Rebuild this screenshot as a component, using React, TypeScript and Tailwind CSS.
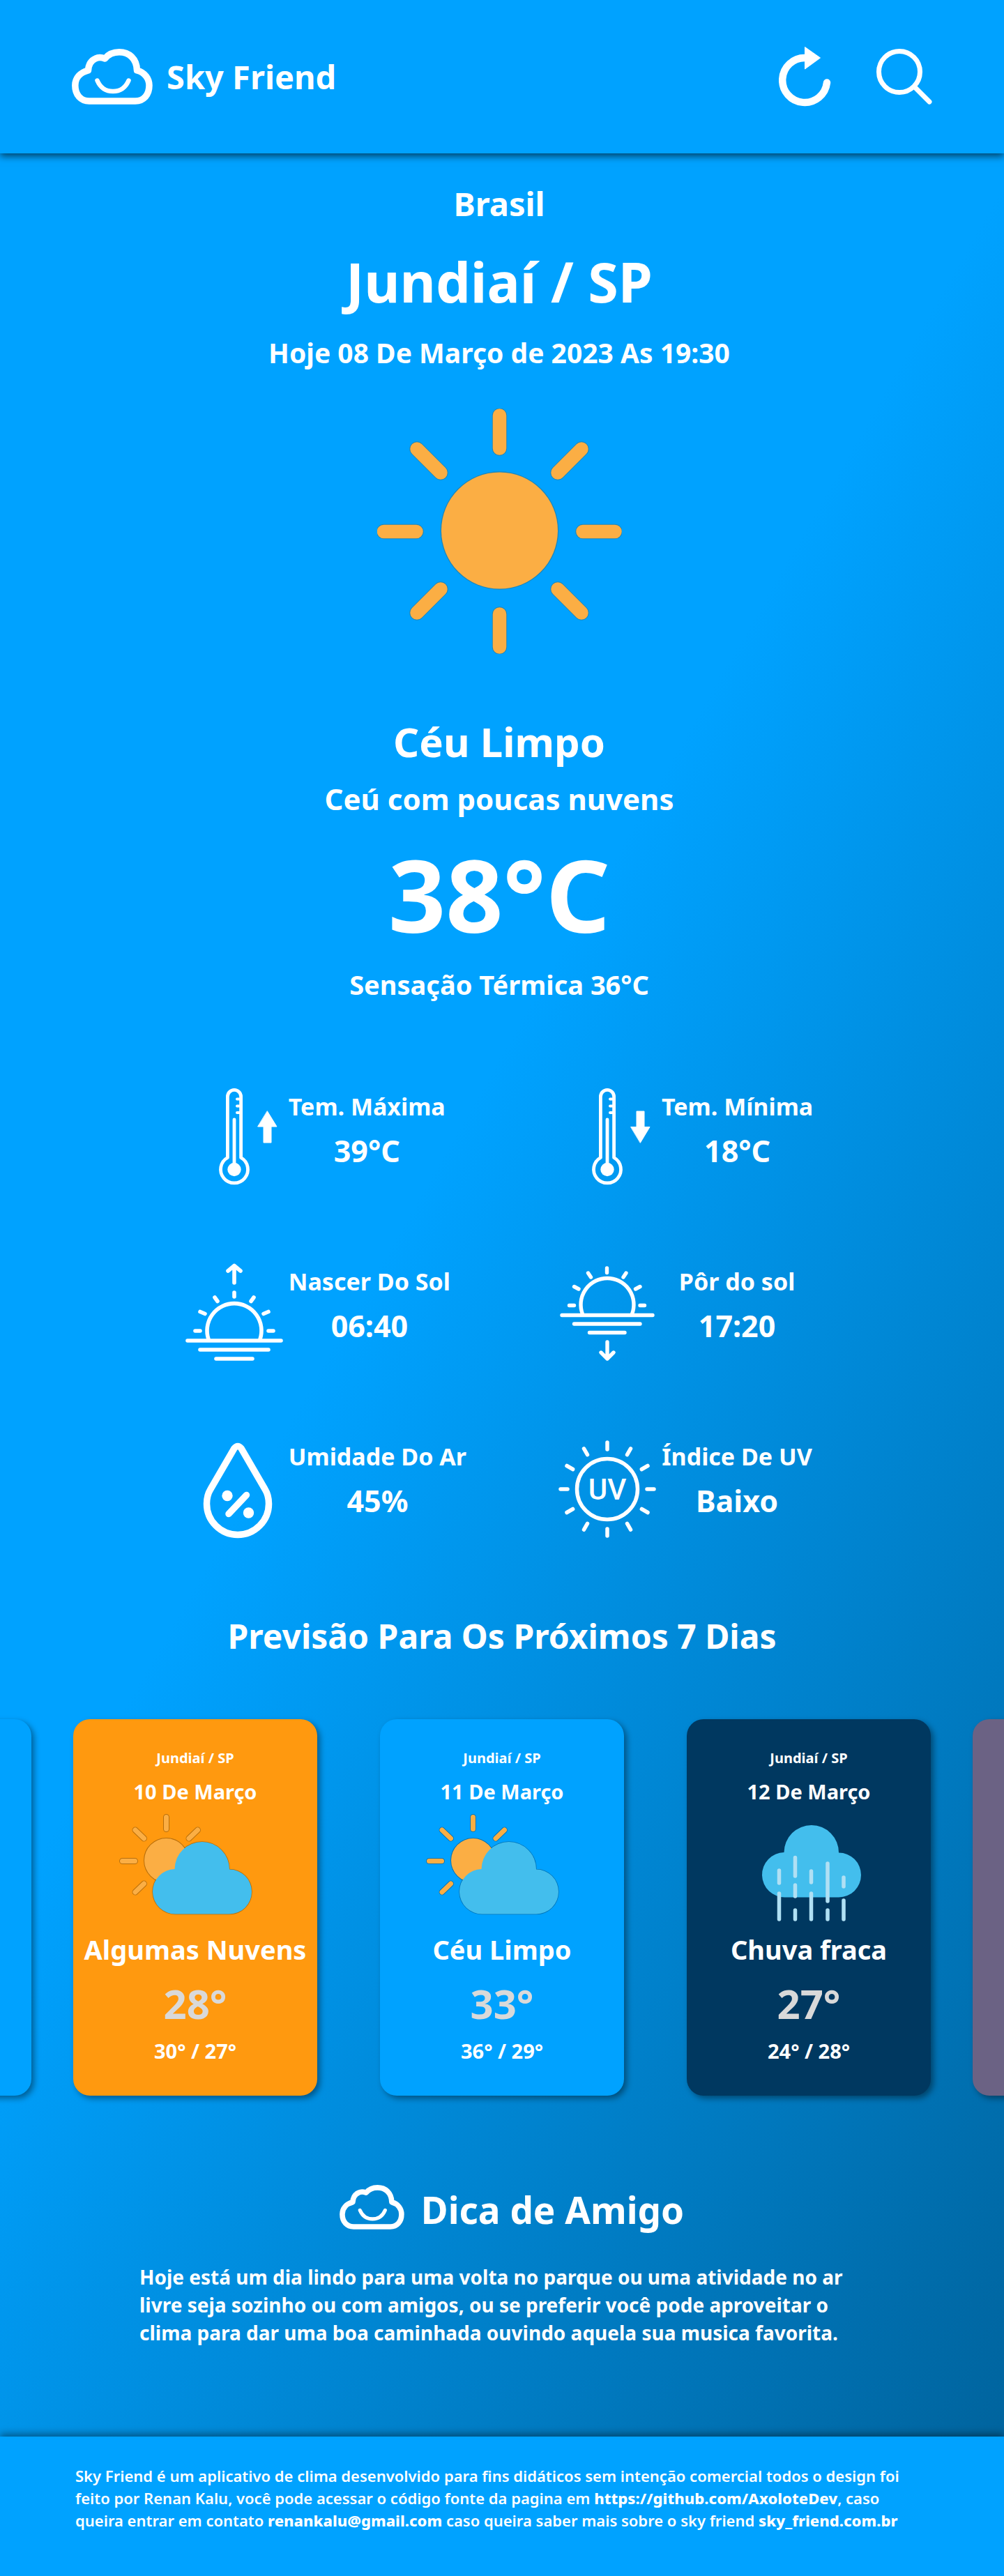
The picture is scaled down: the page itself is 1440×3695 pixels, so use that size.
import type { ReactNode } from "react";

function CloudLogo({ className }: { className: string }) {
  return (
    <svg viewBox="0 0 116 80" className={className} fill="none" stroke="currentColor" strokeLinecap="round" strokeLinejoin="round" aria-hidden="true">
      <path
        strokeWidth="9.5"
        d="M25 75H91C103 75 111 66 111 52.5C111 43 105 34 93.5 31C93 14 82 4.8 68 4.8C59 4.8 52 8.5 47.5 14C42 12 37 12.5 34 14C27 17 24 23 23.500 31C12 34 4.8 42 4.8 52.5C4.8 66 13 75 25 75Z"
      />
      <path strokeWidth="6.5" d="M36.5 45.5C41 56 49 61 59 61S77 56 81.5 45.5" />
    </svg>
  );
}

function RefreshIcon() {
  return (
    <svg viewBox="0 0 76 86" className="h-[86px] w-[76px]" aria-hidden="true">
      <path d="M38 16A32 32 0 1 0 69 51.5" fill="none" stroke="currentColor" strokeWidth="10.5" strokeLinecap="round" />
      <path d="M37.5 0.5L59.5 16L37.5 32Z" fill="currentColor" stroke="currentColor" strokeWidth="1" strokeLinejoin="round" />
    </svg>
  );
}

function SearchIcon() {
  return (
    <svg viewBox="0 0 80 80" className="size-20" fill="none" stroke="currentColor" strokeWidth="7" strokeLinecap="round" aria-hidden="true">
      <circle cx="33" cy="33" r="29.5" />
      <path d="M55 55L76 76" />
    </svg>
  );
}

const bigRays = "M175.5 10V57M175.5 295V342M9.5 176.5H56M295 176.5H341M57 58L91 92M293 58L259 92M57 293L91 259M293 293L259 259";

function SunIcon() {
  return (
    <svg viewBox="0 0 351 352" className="h-[352px] w-[351px]" fill="none" strokeLinecap="round" role="img" aria-label="Sol">
      <g stroke="#1f86b8" strokeWidth="21.5">
        <path d={bigRays} />
        <circle cx="175.5" cy="175" r="74" />
      </g>
      <path d={bigRays} stroke="#fbae44" strokeWidth="19.5" />
      <circle cx="175.5" cy="175" r="83.500" fill="#fbae44" />
    </svg>
  );
}

function Metric({ icon, label, value }: { icon: ReactNode; label: string; value: string }) {
  return (
    <div className="flex gap-2">
      <svg viewBox="0 0 140 144" className="h-36 w-[140px] shrink-0" fill="none" stroke="currentColor" strokeLinecap="round" strokeLinejoin="round" aria-hidden="true">
        {icon}
      </svg>
      <dl className="min-w-[216px] pt-0.5 text-center whitespace-nowrap">
        <dt className="text-[34px] leading-12">{label}</dt>
        <dd className="mt-3 text-[43px] leading-14">{value}</dd>
      </dl>
    </div>
  );
}

function Thermometer() {
  return (
    <>
      <g strokeWidth="4.8">
        <path d="M60.4 99.500V12A9.6 9.6 0 0 1 79.6 12V99.5A19.5 19.5 0 1 1 60.4 99.5Z" />
        <path d="M70 45V114" />
        <path strokeWidth="4" d="M74 15.500H79M74 25.5H79M74 35H79" />
      </g>
      <circle cx="70" cy="116.5" r="9.7" fill="currentColor" stroke="none" />
    </>
  );
}

const maxIcon = (
  <>
    <Thermometer />
    <path d="M117.5 33L131 55H123V78H112V55H104Z" fill="currentColor" strokeWidth="1" />
  </>
);

const minIcon = (
  <>
    <Thermometer />
    <path d="M117.5 78L131 55.5H123V33H112V55.5H104Z" fill="currentColor" strokeWidth="1" />
  </>
);

const sunriseIcon = (
  <g strokeWidth="5.6">
    <path d="M3 111H137M21 124H119M44 137H96" />
    <path d="M33 109A39 39 0 1 1 107 109" />
    <path d="M14 97H21M119 97H126M21 69.5L28 72.5M119 69.5L112 72.5M42 49L46 54.5M98 49L94 54.5M70 42V48" />
    <path d="M70 28V4M61 11L70 3.5L79 11" />
  </g>
);

const sunsetIcon = (
  <g strokeWidth="5.4">
    <path d="M5 74.5H135M22.5 87H117M44.5 99.5H95" />
    <path d="M34.5 73A38 38 0 1 1 105.5 73" />
    <path d="M15.5 60.5H22.5M117 60.5H123.5M22.5 33.5L29 37M117 33.5L110.500 37M42.5 14L46.5 20M97 14L93 20M69.5 7V13.5" />
    <path d="M70 113V137M61 128L70 137L79 128" />
  </g>
);

const humidityIcon = (
  <>
    <path strokeWidth="9.5" d="M70 14.5L36 73C32 79.5 30.5 86 30.5 94A44.5 44.5 0 0 0 119.5 94C119.5 86 118 79.5 114 73L80 14.5Q75 8.5 70 14.5Z" />
    <path strokeWidth="9.5" d="M62 108.5L87.5 81.5" />
    <circle cx="60" cy="82.5" r="7.7" fill="currentColor" stroke="none" />
    <circle cx="90.5" cy="107" r="7.7" fill="currentColor" stroke="none" />
  </>
);

const uvIcon = (
  <>
    <circle cx="70" cy="73" r="43.5" strokeWidth="5.5" />
    {[0, 30, 60, 90, 120, 150, 180, 210, 240, 270, 300, 330].map((angle) => (
      <path key={angle} d="M70 6V16" strokeWidth="5.5" transform={`rotate(${angle} 70 73)`} />
    ))}
    <text x="70" y="88" textAnchor="middle" fill="currentColor" stroke="none" className="font-[Roboto] text-[42px] font-medium">
      UV
    </text>
  </>
);

const metrics = [
  { label: "Tem. Máxima", value: "39°C", icon: maxIcon },
  { label: "Tem. Mínima", value: "18°C", icon: minIcon },
  { label: "Nascer Do Sol", value: "06:40", icon: sunriseIcon },
  { label: "Pôr do sol", value: "17:20", icon: sunsetIcon },
  { label: "Umidade Do Ar", value: "45%", icon: humidityIcon },
  { label: "Índice De UV", value: "Baixo", icon: uvIcon },
];

const smallRays = "M133.5 4.5V21.5M70.5 67.5H88.5M89 23L101.5 35M178.5 23L166 35M89 112L101.5 100";
const cloudShape = "M145.5 79A39.2 39.2 0 0 1 224 79.5A32 32 0 0 1 224 143.5H147A32.2 32.2 0 0 1 145.5 79Z";

function PartlyCloudy() {
  return (
    <svg viewBox="0 0 350 154" className="h-[154px] w-full" fill="none" strokeLinecap="round" aria-hidden="true">
      <g stroke="#000" strokeOpacity="0.28">
        <path d={smallRays} strokeWidth="9" />
        <circle cx="133.5" cy="66.5" r="31.5" strokeWidth="2" />
        <path d={cloudShape} strokeWidth="1.5" />
      </g>
      <path d={smallRays} stroke="#fbae44" strokeWidth="7" />
      <circle cx="133.5" cy="66.5" r="31.5" fill="#fbae44" />
      <path d={cloudShape} fill="#43beed" />
    </svg>
  );
}

function RainCloud() {
  return (
    <svg viewBox="0 0 350 154" className="h-[154px] w-full" fill="none" strokeLinecap="round" aria-hidden="true">
      <path d={cloudShape} transform="translate(-6 -24)" fill="#43beed" />
      <path
        d="M132.5 81V99M132.5 114V151M155.5 62.5V89M155.5 102V118M155.5 138V151M178.500 82V98M178.5 114V151M202 71V125M202 138V151M225 91V104M225 124V151"
        stroke="#b0e0f4"
        strokeWidth="5.5"
      />
    </svg>
  );
}

const forecast = [
  { date: "10 De Março", sky: "Algumas Nuvens", temp: "28°", range: "30° / 27°", color: "bg-[#ff990f]", icon: <PartlyCloudy /> },
  { date: "11 De Março", sky: "Céu Limpo", temp: "33°", range: "36° / 29°", color: "bg-[#00a2ff]", icon: <PartlyCloudy /> },
  { date: "12 De Março", sky: "Chuva fraca", temp: "27°", range: "24° / 28°", color: "bg-[#003860]", icon: <RainCloud /> },
];

const cardBase = "w-[350px] shrink-0 rounded-3xl shadow-[4px_4px_8px_rgba(0,0,0,0.4)]";

export default function App() {
  return (
    <div className="bg-[#00a2ff] font-['Noto_Sans',sans-serif] font-bold text-white">
      <header className="relative shadow-[0_4px_10px_rgba(0,0,0,0.6)]">
        <div className="mx-auto flex h-[220px] max-w-[1234px] items-center justify-between">
          <a href="#inicio" className="flex items-center gap-5">
            <CloudLogo className="h-20 w-[116px]" />
            <span className="text-[47px] leading-16">Sky Friend</span>
          </a>
          <div className="flex items-center gap-16">
            <button type="button" aria-label="Atualizar">
              <RefreshIcon />
            </button>
            <button type="button" aria-label="Buscar">
              <SearchIcon />
            </button>
          </div>
        </div>
      </header>

      <main id="inicio" className="overflow-x-clip bg-[linear-gradient(120deg,#00a2ff_44%,#00649e_100%)] pt-10 pb-[129px]">
        <section className="flex flex-col items-center pr-2 text-center">
          <p className="text-[47px] leading-16">Brasil</p>
          <h1 className="mt-8 text-[79px] leading-24">Jundiaí / SP</h1>
          <p className="mt-[30px] text-[39px] leading-12">Hoje 08 De Março de 2023 As 19:30</p>
          <div className="mt-14">
            <SunIcon />
          </div>
          <h2 className="mt-[86px] text-[58px] leading-20">Céu Limpo</h2>
          <p className="mt-[14px] text-[42px] leading-14">Ceú com poucas nuvens</p>
          <p className="mt-3 text-[144px] leading-48">38°C</p>
          <p className="mt-[10px] text-[38px] leading-12">Sensação Térmica 36°C</p>
        </section>

        <section className="mx-auto mt-[125px] grid w-fit grid-cols-[auto_auto] gap-x-[132px] gap-y-[107px] pr-2">
          {metrics.map((m) => (
            <Metric key={m.label} {...m} />
          ))}
        </section>

        <section>
          <h2 className="mt-[108px] text-center text-5xl leading-16">Previsão Para Os Próximos 7 Dias</h2>
          <div className="mt-[87px] flex justify-center gap-[60px]">
            <div className={`${cardBase} bg-[#00a2ff]`} />
            <div className="flex shrink-0 gap-[90px]">
              {forecast.map((f) => (
                <article key={f.date} className={`${cardBase} ${f.color} pt-[42px] pb-11 text-center`}>
                  <p className="text-xl leading-7">Jundiaí / SP</p>
                  <p className="mt-[14px] text-[29px] leading-10">{f.date}</p>
                  <div className="mt-3">{f.icon}</div>
                  <h3 className="mt-4 text-[38px] leading-12">{f.sky}</h3>
                  <p className="mt-[14px] text-[58px] leading-20 text-[#d9d9d9]">{f.temp}</p>
                  <p className="mt-2 text-[29px] leading-10">{f.range}</p>
                </article>
              ))}
            </div>
            <div className={`${cardBase} bg-[#6b6284]`} />
          </div>
        </section>

        <section className="mx-auto max-w-[1040px]">
          <div className="mt-32 flex justify-center gap-6 pl-7">
            <CloudLogo className="h-16 w-[93px]" />
            <h2 className="text-[53px] leading-18">Dica de Amigo</h2>
          </div>
          <p className="mt-10 text-[28px] leading-10">
            Hoje está um dia lindo para uma volta no parque ou uma atividade no ar livre seja sozinho ou com amigos, ou se
            preferir você pode aproveitar o clima para dar uma boa caminhada ouvindo aquela sua musica favorita.
          </p>
        </section>
      </main>

      <footer className="relative bg-[#00a2ff] pt-10 pb-16 shadow-[0_-4px_10px_rgba(0,0,0,0.4)]">
        <p className="mx-auto max-w-[1224px] pr-3 text-[22px] leading-8 font-semibold">
          Sky Friend é um aplicativo de clima desenvolvido para fins didáticos sem intenção comercial todos o design foi
          feito por Renan Kalu, você pode acessar o código fonte da pagina em{" "}
          <a href="https://github.com/AxoloteDev" className="font-extrabold">https://github.com/AxoloteDev</a>, caso queira
          entrar em contato{" "}
          <a href="mailto:renankalu@gmail.com" className="font-extrabold">renankalu@gmail.com</a> caso queira saber mais
          sobre o sky friend{" "}
          <a href="https://sky_friend.com.br" className="font-extrabold">sky_friend.com.br</a>
        </p>
      </footer>
    </div>
  );
}
